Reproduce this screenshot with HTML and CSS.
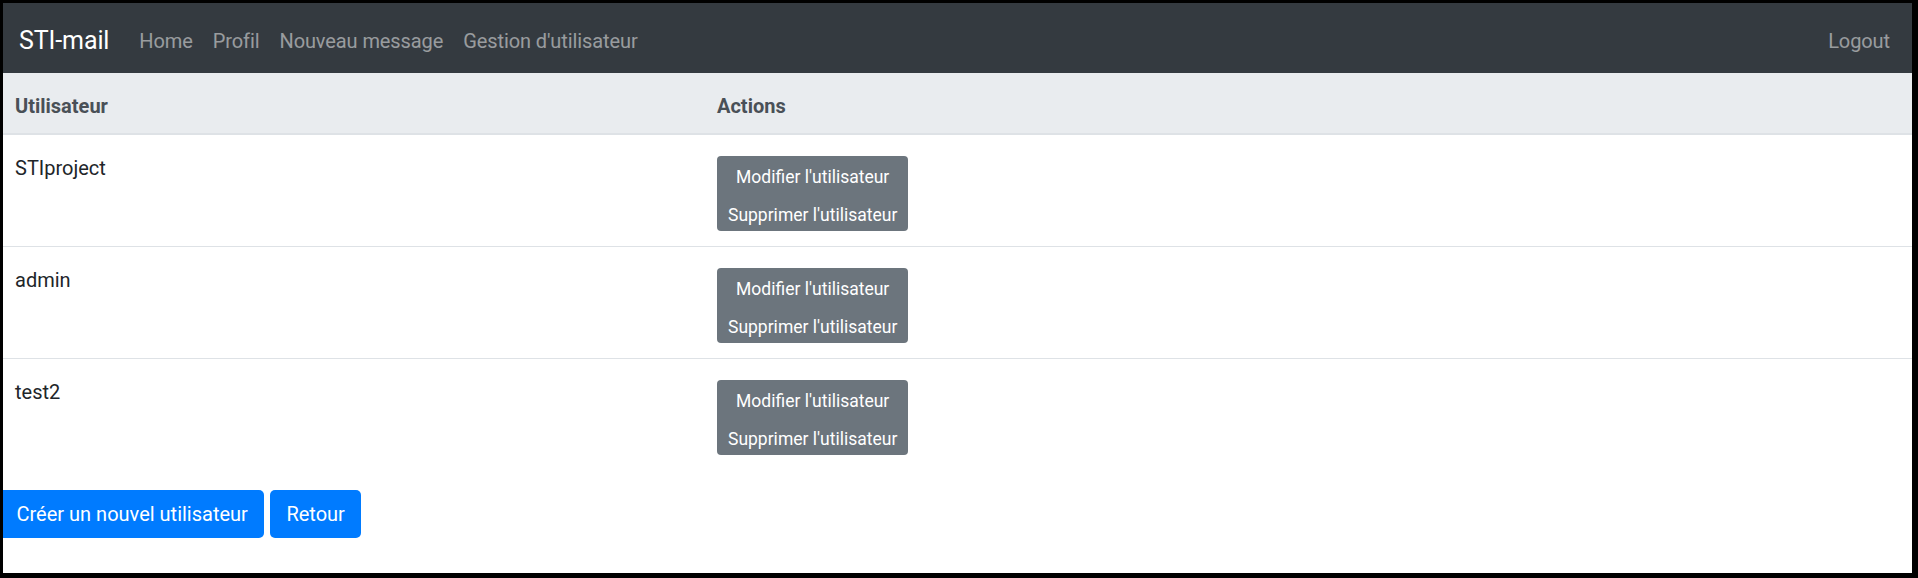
FILE: index.html
```html
<!DOCTYPE html>
<html lang="fr">
<head>
<meta charset="utf-8">
<title>STI-mail</title>
<link rel="stylesheet" href="styles.css">
</head>
<body>
<div class="screen">
  <nav class="navbar">
    <a class="brand" href="#">STI-mail</a>
    <ul class="nav">
      <li><a class="nav-link" href="#">Home</a></li>
      <li><a class="nav-link" href="#">Profil</a></li>
      <li><a class="nav-link" href="#">Nouveau message</a></li>
      <li><a class="nav-link" href="#">Gestion d'utilisateur</a></li>
    </ul>
    <ul class="nav nav-right">
      <li><a class="nav-link" href="#">Logout</a></li>
    </ul>
  </nav>

  <table class="users">
    <colgroup>
      <col class="col-user">
      <col class="col-actions">
    </colgroup>
    <thead>
      <tr><th>Utilisateur</th><th>Actions</th></tr>
    </thead>
    <tbody>
      <tr>
        <td class="name">STIproject</td>
        <td class="actions">
          <div class="btn-stack">
            <a class="stack-item" href="#">Modifier l'utilisateur</a>
            <a class="stack-item" href="#">Supprimer l'utilisateur</a>
          </div>
        </td>
      </tr>
      <tr>
        <td class="name">admin</td>
        <td class="actions">
          <div class="btn-stack">
            <a class="stack-item" href="#">Modifier l'utilisateur</a>
            <a class="stack-item" href="#">Supprimer l'utilisateur</a>
          </div>
        </td>
      </tr>
      <tr>
        <td class="name">test2</td>
        <td class="actions">
          <div class="btn-stack">
            <a class="stack-item" href="#">Modifier l'utilisateur</a>
            <a class="stack-item" href="#">Supprimer l'utilisateur</a>
          </div>
        </td>
      </tr>
    </tbody>
  </table>

  <div class="footer-actions">
    <a class="btn btn-primary btn-first" href="#">Créer un nouvel utilisateur</a>
    <a class="btn btn-primary" href="#">Retour</a>
  </div>
</div>
</body>
</html>
```
FILE: styles.css
```css
html, body {
  margin: 0;
  padding: 0;
  background: #000;
}

body {
  font-family: Roboto, "Liberation Sans", sans-serif;
  font-size: 20px;
  line-height: 30px;
  color: #212529;
}

a { text-decoration: none; }

.screen {
  width: 1918px;
  height: 578px;
  box-sizing: border-box;
  border-style: solid;
  border-color: #000;
  border-width: 3px 6px 5px 3px;
  background: #fff;
  display: flex;
  flex-direction: column;
  overflow: hidden;
}

/* ---------- navbar ---------- */
.navbar {
  height: 70px;
  box-sizing: border-box;
  background: #343a40;
  display: flex;
  align-items: flex-start;
  padding: 18.5px 12px 0 16px;
  flex-shrink: 0;
}

.brand {
  font-size: 25px;
  line-height: 37.5px;
  color: #fff;
  margin-right: 20px;
  white-space: nowrap;
  letter-spacing: -0.1px;
}

.nav {
  list-style: none;
  margin: 0;
  padding: 4px 0 0 0;
  display: flex;
}

.nav-right {
  margin-left: auto;
}

.nav-link {
  display: block;
  padding: 0 10px;
  font-size: 20px;
  line-height: 30px;
  color: rgba(255, 255, 255, 0.5);
  white-space: nowrap;
  letter-spacing: -0.1px;
}

/* ---------- table ---------- */
.users {
  width: 100%;
  border-collapse: separate;
  border-spacing: 0;
  table-layout: fixed;
  margin-bottom: 20px;
}

.col-user { width: 702px; }

.users th {
  text-align: left;
  font-weight: 700;
  color: #495057;
  background: #e9ecef;
  padding: 18px 12px 11.5px 12px;
  line-height: 30px;
  border-bottom: 2px solid #dee2e6;
}

.users td {
  vertical-align: top;
  padding: 18px 12px 15px 12px;
  line-height: 30px;
}

.users tbody tr + tr td {
  border-top: 1px solid #dee2e6;
}

.users td.actions {
  padding-top: 21px;
}

.users tr:nth-child(1) td.actions { padding-top: 21.5px; }

.btn-stack {
  display: inline-flex;
  flex-direction: column;
  background: #6c757d;
  border-radius: 4px;
  padding: 0 11px;
}

.stack-item {
  display: block;
  text-align: center;
  color: #fff;
  font-size: 17.5px;
  line-height: 26.25px;
  padding: 8px 0 3.25px 0;
  white-space: nowrap;
}

/* ---------- bottom buttons ---------- */
.footer-actions {
  display: flex;
  gap: 6.5px;
}

.btn {
  display: block;
  font-size: 20px;
  line-height: 30px;
  padding: 9px 16px 8.5px 16px;
  border-radius: 5px;
  white-space: nowrap;
}

.btn-primary {
  background: #007bff;
  color: #fff;
}

.btn-first {
  padding-left: 13.5px;
  border-top-left-radius: 0;
  border-bottom-left-radius: 0;
}
```
